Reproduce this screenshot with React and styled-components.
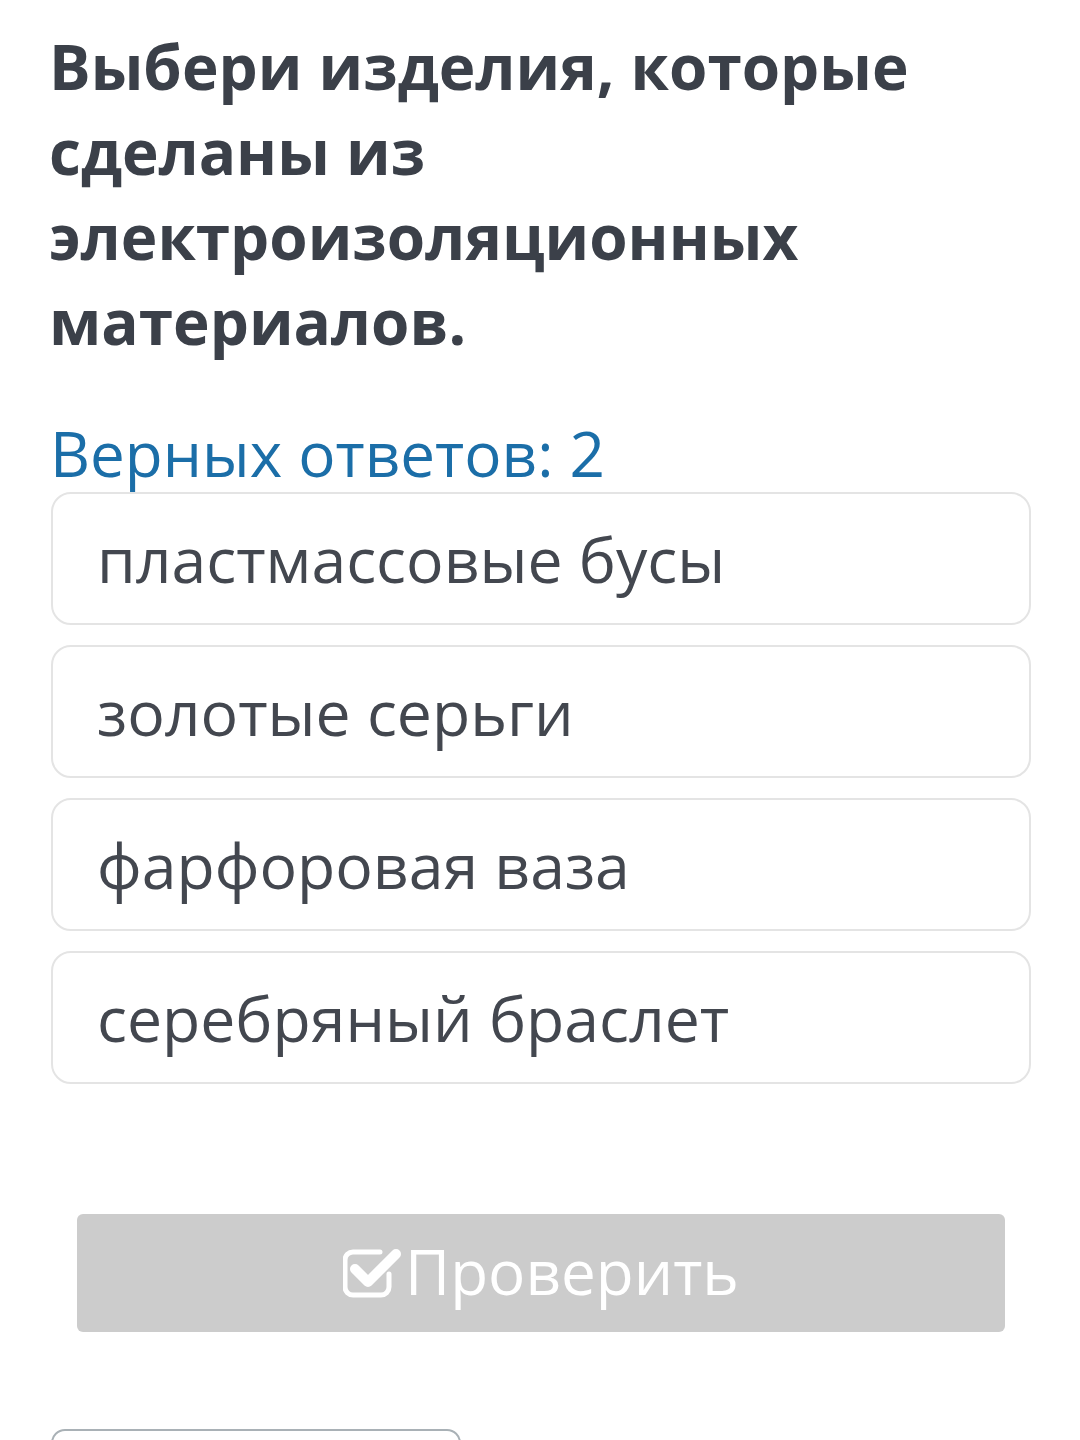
import React from 'react';
import styled, { createGlobalStyle } from 'styled-components';

const options = [
    'пластмассовые бусы',
    'золотые серьги',
    'фарфоровая ваза',
    'серебряный браслет',
];

export default function App(){
    return(
        <>
        <GlobalStyle/>
        <Page>
            <Question>Выбери изделия, которые сделаны из электроизоляционных материалов.</Question>
            <Hint>Верных ответов: 2</Hint>

            <OptionList>
                {options.map(text =>
                    <Option key={text}>{text}</Option>
                )}
            </OptionList>

            <CheckButton disabled>
                <CheckIcon/>
                Проверить
            </CheckButton>

            <NextBox/>
        </Page>
        </>
    );
};

function CheckIcon(){
    return(
        <svg width="60" height="52" viewBox="0 0 60 52" fill="none">
            <path d="M37 5 H10 a8 8 0 0 0 -8 8 V40 a8 8 0 0 0 8 8 H38 a8 8 0 0 0 8 -8 V27"
                stroke="white" strokeWidth="5" strokeLinecap="round" strokeLinejoin="round"/>
            <path d="M12 22 L25 35 L53 7"
                stroke="white" strokeWidth="10" strokeLinecap="round" strokeLinejoin="round"/>
        </svg>
    );
}

const GlobalStyle = createGlobalStyle`
    body{
        margin: 0;
        background: #ffffff;
        font-family: "Open Sans", "Liberation Sans", sans-serif;
    }
`;

const Page = styled.div`
    width: 1080px;
    height: 1440px;
    overflow: hidden;
    box-sizing: border-box;
    padding: 24px 49px 0 51px;
`;

const Question = styled.h1`
    margin: 0 0 0 -2px;
    font-size: 62px;
    line-height: 85px;
    font-weight: 700;
    color: #3b4049;
`;

const Hint = styled.div`
    margin-top: 53px;
    margin-left: -1px;
    font-size: 62px;
    line-height: 72px;
    color: #1b6ea8;
`;

const OptionList = styled.div`
    margin-top: 3px;
    display: flex;
    flex-direction: column;
    gap: 20px;
`;

const Option = styled.div`
    height: 133px;
    box-sizing: border-box;
    border: 2px solid #e4e4e4;
    border-radius: 20px;
    padding: 0 0 0 44px;
    display: flex;
    align-items: center;
    font-size: 62.5px;
    color: #43474f;
`;

const CheckButton = styled.button`
    margin: 130px 26px 0 26px;
    width: calc(100% - 52px);
    height: 118px;
    border: none;
    border-radius: 6px;
    background: #cccccc;
    color: #ffffff;
    font-family: "Open Sans", "Liberation Sans", sans-serif;
    font-size: 62px;
    display: flex;
    align-items: center;
    justify-content: center;
    gap: 2px;
    padding: 0 0 4px 0;

    svg{
        margin-top: 4px;
    }
`;

const NextBox = styled.div`
    margin-top: 97px;
    width: 406px;
    height: 60px;
    border: 2px solid #a9b1b6;
    border-radius: 14px;
`;
